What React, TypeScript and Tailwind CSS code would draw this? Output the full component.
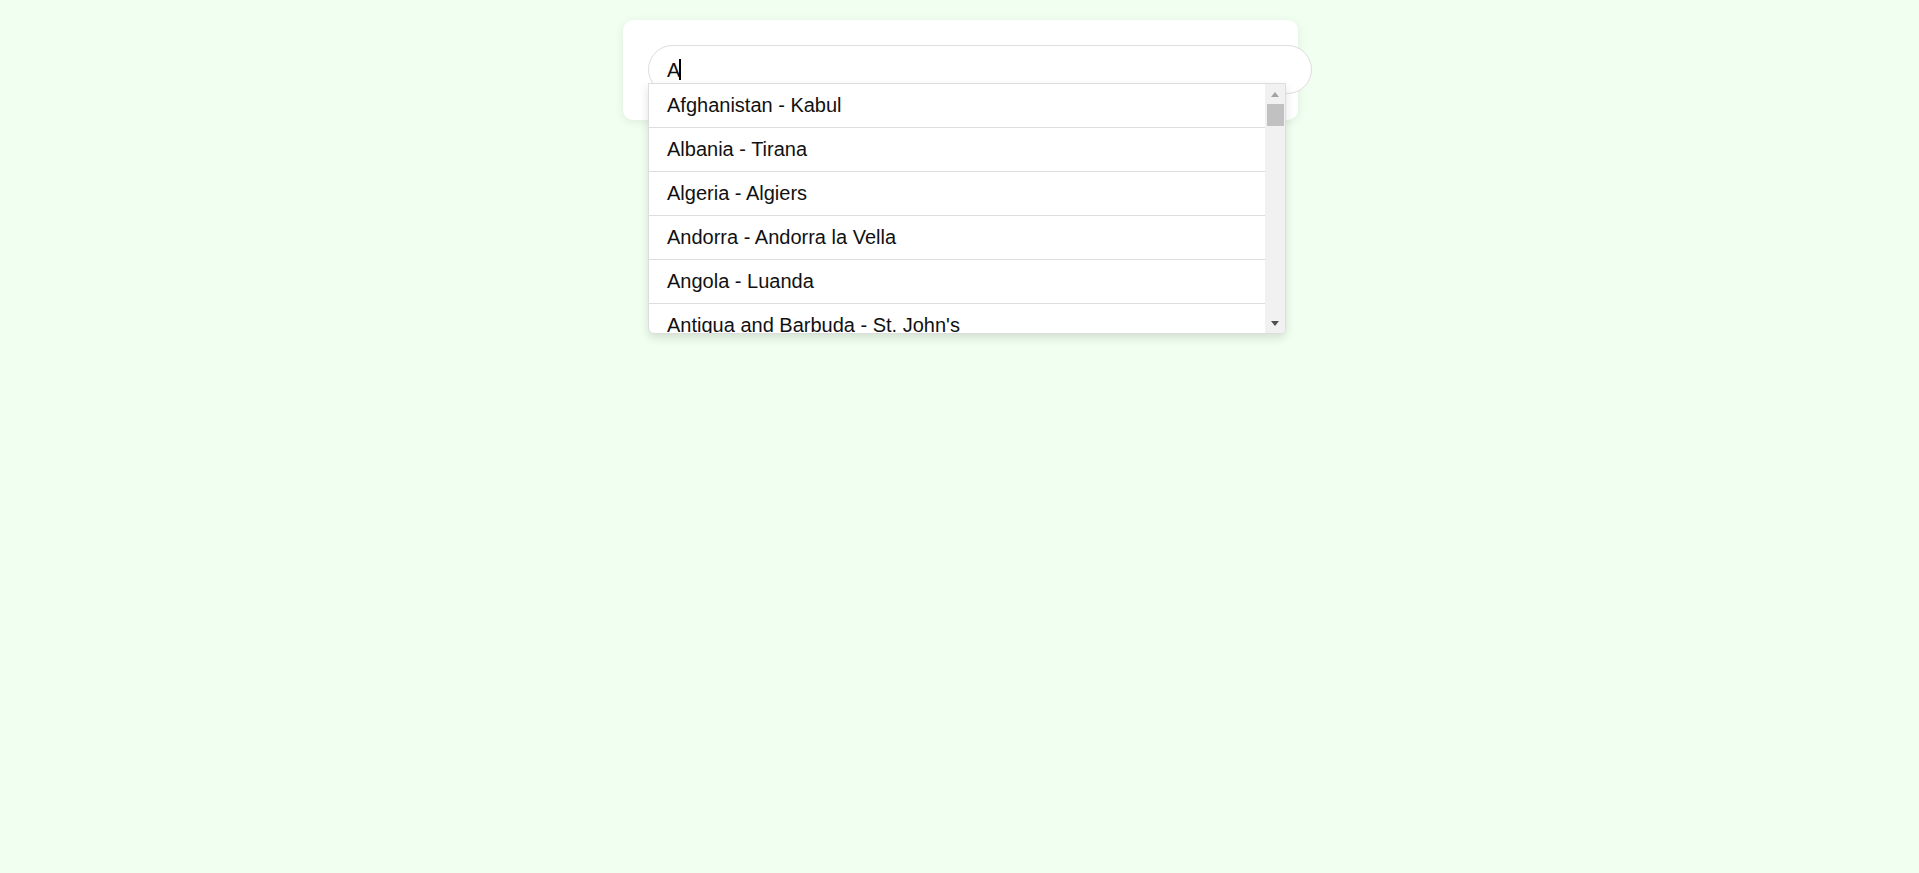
const countries = [
  'Afghanistan - Kabul',
  'Albania - Tirana',
  'Algeria - Algiers',
  'Andorra - Andorra la Vella',
  'Angola - Luanda',
  "Antigua and Barbuda - St. John's",
]

const Scrollbar = () => {
  return (
    <div className="w-[20px] shrink-0 bg-[#f1f1f1] flex flex-col items-center">
      <div className="h-[20px] w-full flex items-center justify-center">
        <svg width="8" height="5" viewBox="0 0 8 5">
          <path d="M0 5 L4 0 L8 5 Z" fill="#a3a3a3" />
        </svg>
      </div>
      <div className="w-[17px] h-[22px] bg-[#c1c1c1]" />
      <div className="flex-1" />
      <div className="h-[20px] w-full flex items-center justify-center">
        <svg width="8" height="5" viewBox="0 0 8 5">
          <path d="M0 0 L8 0 L4 5 Z" fill="#505050" />
        </svg>
      </div>
    </div>
  )
}

export default function App() {
  return (
    <div className="min-h-screen bg-[#f0fff0] pt-[20px] pl-[2px] flex justify-center font-['Liberation_Sans',Arial,sans-serif]">
      <div className="w-[675px] h-[100px] bg-white rounded-[10px] shadow-[0_2px_10px_rgba(0,0,0,0.08)] p-[25px]">
        <div className="relative">
          {/* search input */}
          <div className="w-[664px] h-[49px] rounded-full border border-[#dddddd] bg-white flex items-center pl-[18px] text-[20px] text-[#111]">
            <span>A</span>
            <span className="w-[2px] h-[21px] bg-black -ml-[1px]" />
          </div>

          {/* suggestions */}
          <div className="absolute left-0 top-[38px] w-[638px] h-[251px] bg-white border border-[#dddddd] rounded-b-[6px] shadow-[0_4px_10px_rgba(0,0,0,0.12)] flex overflow-hidden">
            <ul className="flex-1 overflow-hidden">
              {countries.map((c, i) => (
                <li key={i} className="h-[44px] border-b border-[#dddddd] pl-[18px] flex items-center text-[20px] text-[#111] leading-[23px]">
                  {c}
                </li>
              ))}
            </ul>
            <Scrollbar />
          </div>
        </div>
      </div>
    </div>
  )
}
